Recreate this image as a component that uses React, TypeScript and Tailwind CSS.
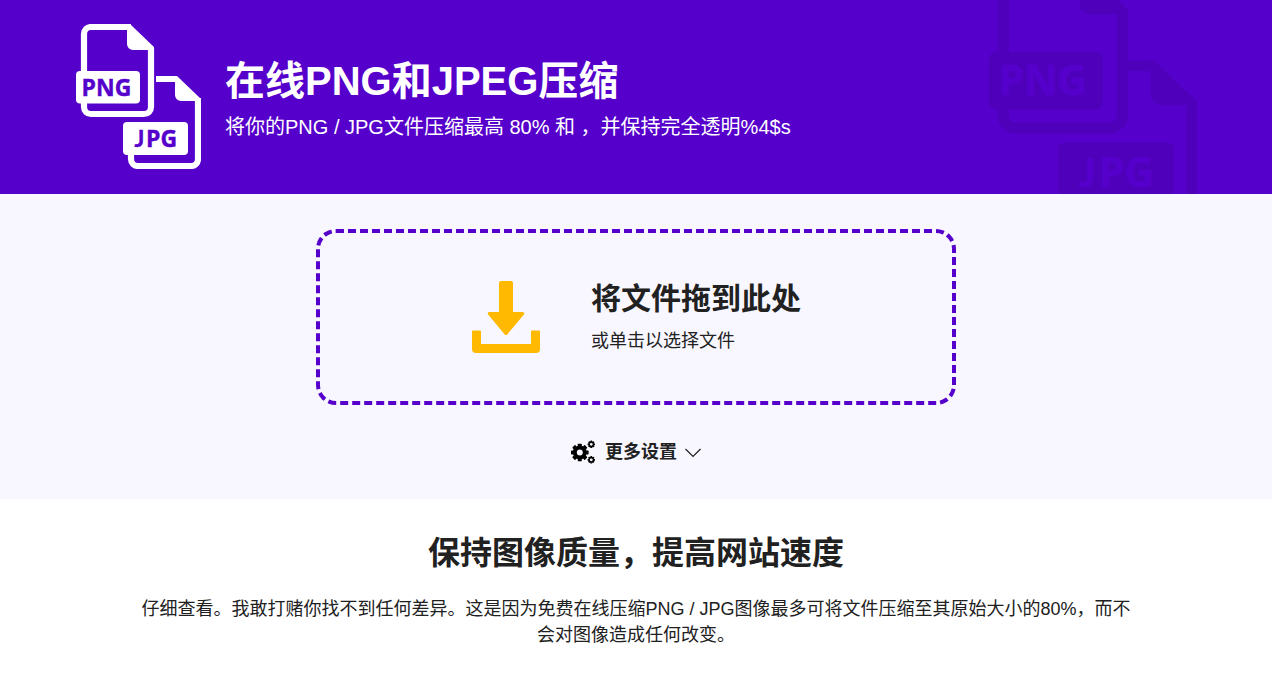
type GearProps = { cx: number; cy: number; radius: number; hole: number; tooth: number };

function Gear({ cx, cy, radius, hole, tooth }: GearProps) {
  const body = radius * 0.8;
  return (
    <g transform={`translate(${cx} ${cy})`}>
      <circle r={(body + hole) / 2} fill="none" stroke="currentColor" strokeWidth={body - hole} />
      {[0, 45, 90, 135, 180, 225, 270, 315].map((angle) => (
        <rect
          key={angle}
          x={-tooth / 2}
          y={-radius}
          width={tooth}
          height={radius - body + 0.6}
          rx={tooth / 6}
          fill="currentColor"
          transform={`rotate(${angle})`}
        />
      ))}
    </g>
  );
}

function GearsIcon() {
  return (
    <svg className="h-6 w-6 shrink-0 text-black" viewBox="0 0 24 24" aria-hidden="true">
      <Gear cx={8.8} cy={12.5} radius={8.8} hole={3} tooth={4} />
      <Gear cx={20.3} cy={4.3} radius={3.7} hole={1.4} tooth={1.8} />
      <Gear cx={20.3} cy={19.8} radius={3.7} hole={1.4} tooth={1.8} />
    </svg>
  );
}

type FilesIconProps = { className: string; ink: string; paper: string; shift?: number };

function FilesIcon({ className, ink, paper, shift = 0 }: FilesIconProps) {
  return (
    <svg className={className} viewBox="0 0 125 145" aria-hidden="true">
      <path
        d="M55 3H15a7 7 0 0 0-7 7V83a7 7 0 0 0 7 7H68a7 7 0 0 0 7-7V24"
        fill="none"
        stroke={ink}
        strokeWidth="6.200"
      />
      <path d="M46 0H54L78 23V26H57a6 6 0 0 1-6-6V6Z" fill={ink} />
      <rect x="0" y="47" width="64" height="32.500" rx="4" fill={ink} />
      <text
        x="5.500"
        y="71.500"
        fontSize="23"
        fontWeight="700"
        fontFamily="Open Sans, sans-serif"
        fill={paper}
        stroke={paper}
        strokeWidth="0.400"
      >
        PNG
      </text>
      <g transform={`translate(${-shift} 0)`}>
        <path d={shift ? "M86 55H101" : "M80 55H101"} fill="none" stroke={ink} strokeWidth="6" />
        <path
          d="M122 74V135a7 7 0 0 1-7 7H62a7 7 0 0 1-7-7V128"
          fill="none"
          stroke={ink}
          strokeWidth="6.200"
        />
        <path d="M96 52H101L125 75V77H105a6 6 0 0 1-6-6V58Z" fill={ink} />
        <rect x="47" y="98" width="65" height="33" rx="4" fill={ink} />
        <text y="123" fontSize="23" fontWeight="700" fill={paper} stroke={paper} strokeWidth="0.400">
          <tspan x="58.500" fontFamily="Lato, sans-serif">J</tspan>
          <tspan x="70" fontFamily="Open Sans, sans-serif">PG</tspan>
        </text>
      </g>
    </svg>
  );
}

function DownloadIcon() {
  return (
    <svg className="h-[72px] w-[68px] shrink-0" viewBox="0 0 68 72" fill="#ffb900" aria-hidden="true">
      <path d="M29 0H39a2 2 0 0 1 2 2V31H50.500a1.600 1.600 0 0 1 1.200 2.800L35.500 53.200a2 2 0 0 1-3 0L16.300 33.800A1.600 1.600 0 0 1 17.500 31H27V2a2 2 0 0 1 2-2Z" />
      <path d="M1 49.500H8a1 1 0 0 1 1 1V63H59V50.500a1 1 0 0 1 1-1H67a1 1 0 0 1 1 1V68a4 4 0 0 1-4 4H4a4 4 0 0 1-4-4V50.500a1 1 0 0 1 1-1Z" />
    </svg>
  );
}

function Hero() {
  return (
    <header className="relative overflow-hidden bg-[#5600cc] px-6 pt-6 pb-[25px] text-white">
      <FilesIcon
        className="absolute -top-8 right-[61px] h-[258px] w-[222px]"
        ink="#4e00ba"
        paper="#5600cc"
        shift={8}
      />
      <div className="relative mx-auto flex max-w-[1120px] items-center gap-6">
        <FilesIcon className="h-[145px] w-[125px] shrink-0" ink="#ffffff" paper="#5600cc" />
        <div className="pt-1">
          <h1 className="text-[40px] leading-[48px] font-bold">在线PNG和JPEG压缩</h1>
          <p className="mt-2 text-xl leading-7">
            将你的PNG / JPG文件压缩最高 80% 和 ，并保持完全透明%4$s
          </p>
        </div>
      </div>
    </header>
  );
}

function Uploader() {
  return (
    <section className="flex flex-col items-center bg-[#f8f7ff] px-6 pt-[35px] pb-8">
      <label className="flex w-full max-w-[640px] cursor-pointer items-center gap-[51px] rounded-[20px] border-4 border-dashed border-[#5600cc] py-12 pl-[152px]">
        <input type="file" multiple accept="image/png,image/jpeg" className="sr-only" />
        <DownloadIcon />
        <span className="flex flex-col gap-2">
          <span className="text-3xl leading-9 font-bold">将文件拖到此处</span>
          <span className="pt-1 text-lg leading-6">或单击以选择文件</span>
        </span>
      </label>
      <button type="button" className="mt-8 flex cursor-pointer items-center gap-2.5 text-lg leading-[30px] font-bold">
        <GearsIcon />
        <span>更多设置</span>
        <svg className="-ml-0.5 h-4 w-4" viewBox="0 0 16 16" fill="none" stroke="currentColor" strokeWidth="1.2" aria-hidden="true">
          <path d="M0.500 5L8 12.500L15.500 5" />
        </svg>
      </button>
    </section>
  );
}

export default function App() {
  return (
    <div className="min-h-screen bg-white font-['Liberation_Sans','Noto_Sans_CJK_SC',sans-serif] text-[#212121]" lang="zh-CN">
      <Hero />
      <main>
        <Uploader />
        <section className="mx-auto max-w-[1040px] px-6 pt-8 pb-10 text-center">
          <h2 className="text-[32px] leading-[44px] font-bold">保持图像质量，提高网站速度</h2>
          <p className="mt-[21px] text-lg leading-[26px]">
            仔细查看。我敢打赌你找不到任何差异。这是因为免费在线压缩PNG / JPG图像最多可将文件压缩至其原始大小的80%，而不会对图像造成任何改变。
          </p>
        </section>
      </main>
    </div>
  );
}
